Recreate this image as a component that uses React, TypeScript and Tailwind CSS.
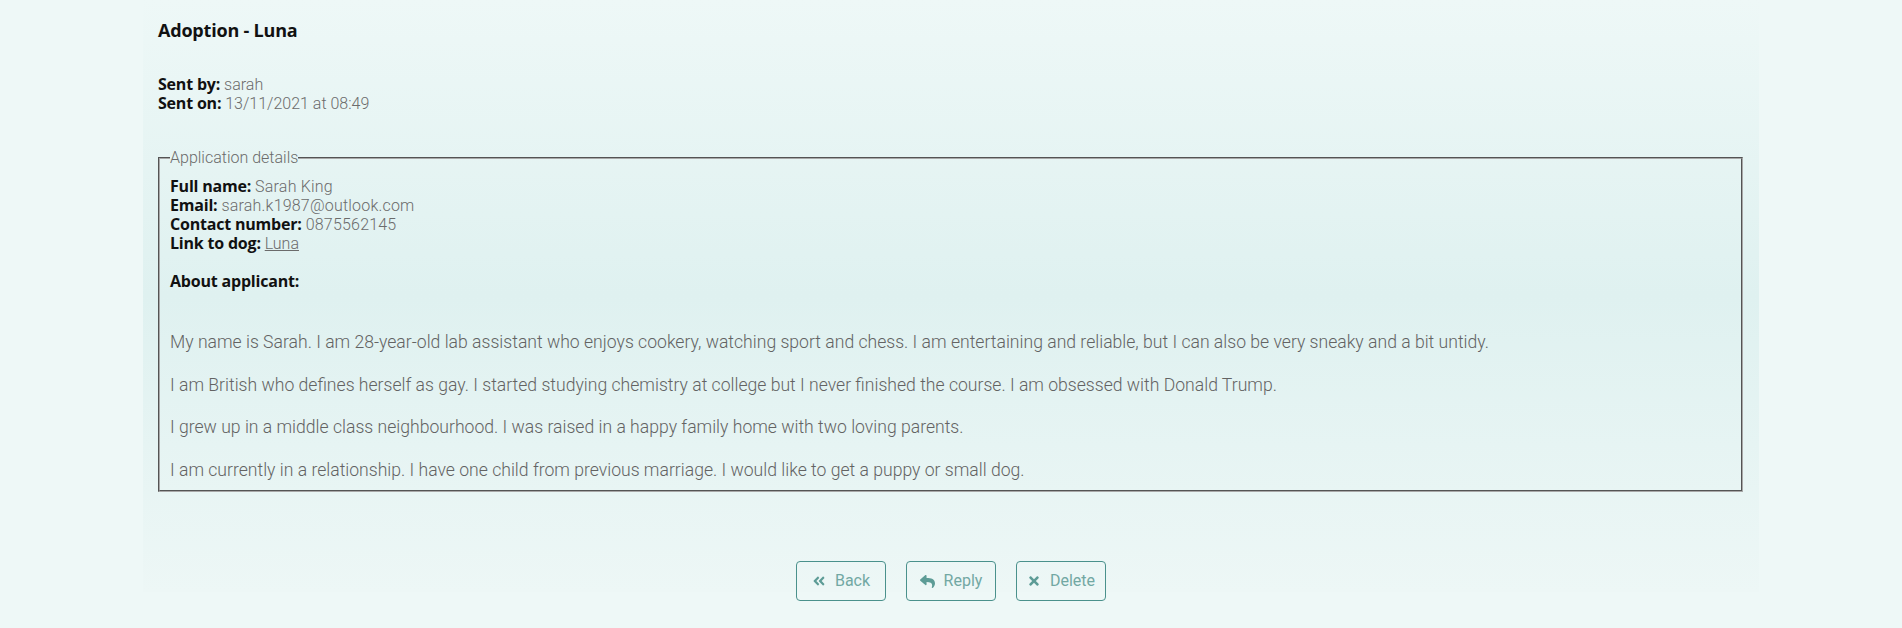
import { FaAngleDoubleLeft, FaReply, FaTimes } from "react-icons/fa";

const details = [
  { label: "Full name:", value: "Sarah King" },
  { label: "Email:", value: "sarah.k1987@outlook.com" },
  { label: "Contact number:", value: "0875562145" },
];

const about = [
  "My name is Sarah. I am 28-year-old lab assistant who enjoys cookery, watching sport and chess. I am entertaining and reliable, but I can also be very sneaky and a bit untidy.",
  "I am British who defines herself as gay. I started studying chemistry at college but I never finished the course. I am obsessed with Donald Trump.",
  "I grew up in a middle class neighbourhood. I was raised in a happy family home with two loving parents.",
  "I am currently in a relationship. I have one child from previous marriage. I would like to get a puppy or small dog.",
];

const Label = ({ children }: { children: React.ReactNode }) => (
  <span className="font-['Open_Sans','Liberation_Sans',sans-serif] font-bold tracking-[-0.2px]">{children}</span>
);

const App = () => {
  return (
    <div className="min-h-screen w-full bg-[#eef8f7] font-['Roboto','Liberation_Sans',sans-serif] text-[#111]">
      {/* Message panel */}
      <div className="ml-[143px] w-[1616px] h-[592px] bg-gradient-to-b from-[#eef8f7] via-[#dff1f0] to-[#edf7f6] px-[15px] pt-[19px]">
        <h1 className="text-[18px] leading-[22px] font-bold font-['Open_Sans','Liberation_Sans',sans-serif] tracking-[-0.2px]">Adoption - Luna</h1>

        <div className="mt-[34px] text-[16px] leading-[19px]">
          <div>
            <Label>Sent by: </Label>
            <span className="font-light text-[#6b6b6b]">sarah</span>
          </div>
          <div>
            <Label>Sent on: </Label>
            <span className="font-light text-[#6b6b6b]">13/11/2021 at 08:49</span>
          </div>
        </div>

        <fieldset className="mt-[35px] w-[1585px] border-2 [border-style:groove] border-[#a8a8a8] px-[10px] pb-[8px]">
          <legend className="text-[16px] leading-[19px] font-light text-[#6b6b6b]">Application details</legend>
          <div className="pt-[10px] text-[16px] leading-[19px]">
            {details.map((d) => (
              <div key={d.label}>
                <Label>{d.label} </Label>
                <span className="font-light text-[#6b6b6b] tracking-[0.2px]">{d.value}</span>
              </div>
            ))}
            <div>
              <Label>Link to dog: </Label>
              <a href="#" className="font-light text-[#6b6b6b] underline">Luna</a>
            </div>
            <div className="mt-[19px]">
              <Label>About applicant:</Label>
            </div>
          </div>
          <div className="mt-[39px] flex flex-col gap-[18.5px] text-[17.6px] leading-[24px] font-light text-[#636363]">
            {about.map((p, i) => (
              <p key={i}>{p}</p>
            ))}
          </div>
        </fieldset>
      </div>

      {/* Actions */}
      <div className="-mt-[31px] flex justify-center gap-[20px]">
        <button className="w-[90px] h-[40px] flex items-center justify-center gap-[9px] rounded-[4px] border border-[#4a918c] text-[16px] text-[#72a8a3]">
          <FaAngleDoubleLeft className="text-[14px] text-[#5d9c96]" />
          Back
        </button>
        <button className="w-[90px] h-[40px] flex items-center justify-center gap-[9px] rounded-[4px] border border-[#4a918c] text-[16px] text-[#72a8a3]">
          <FaReply className="text-[15px] text-[#5d9c96]" />
          Reply
        </button>
        <button className="w-[90px] h-[40px] flex items-center justify-center gap-[9px] rounded-[4px] border border-[#4a918c] text-[16px] text-[#72a8a3]">
          <FaTimes className="text-[14px] text-[#5d9c96]" />
          Delete
        </button>
      </div>
    </div>
  );
};

export default App;
